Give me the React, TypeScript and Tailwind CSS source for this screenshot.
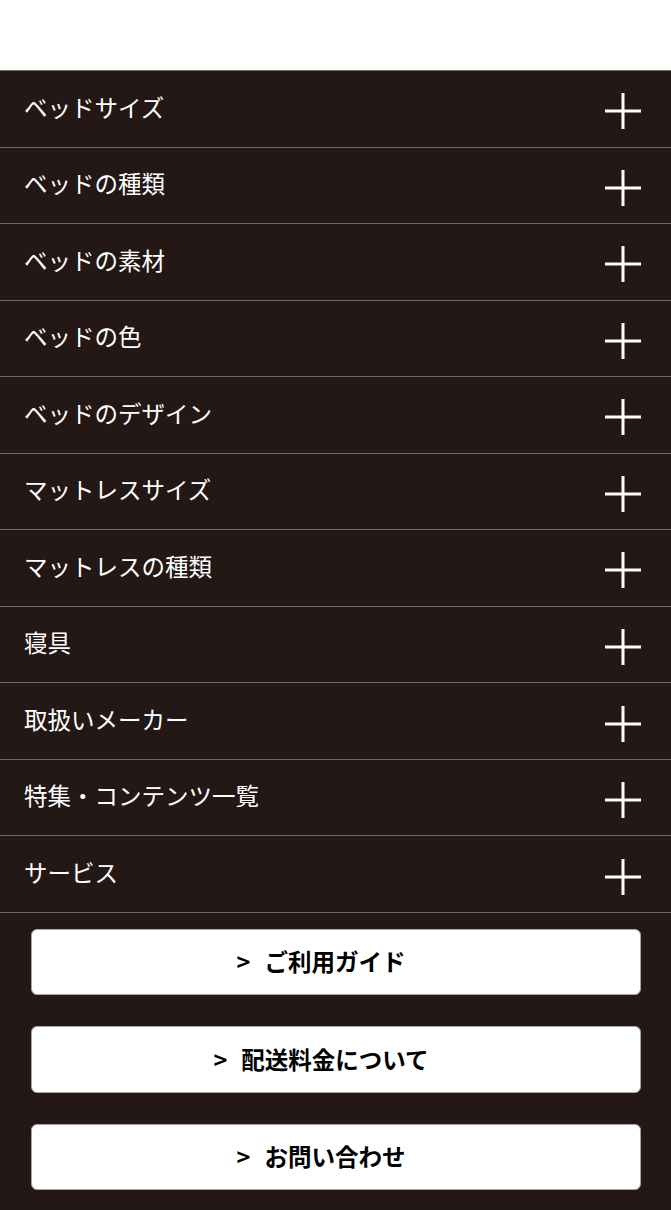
import React from "react";

const items = [
  "ベッドサイズ",
  "ベッドの種類",
  "ベッドの素材",
  "ベッドの色",
  "ベッドのデザイン",
  "マットレスサイズ",
  "マットレスの種類",
  "寝具",
  "取扱いメーカー",
  "特集・コンテンツ一覧",
  "サービス",
];

const buttons = ["ご利用ガイド", "配送料金について", "お問い合わせ"];

function Plus() {
  return (
    <svg width="36" height="36" viewBox="0 0 36 36" className="shrink-0">
      <rect x="16.5" y="0" width="3" height="36" fill="#fff" />
      <rect x="0" y="16.5" width="36" height="3" fill="#fff" />
    </svg>
  );
}

export default function App() {
  return (
    <div
      className="w-[671px] h-[1210px] bg-white overflow-hidden"
      style={{ fontFamily: '"Noto Sans CJK JP", "Noto Sans", sans-serif' }}
    >
      <div className="h-[70px] bg-white" />
      <div className="bg-[#231816] h-[1140px]">
        <ul className="border-t border-[#706868]">
          {items.map((t) => (
            <li
              key={t}
              className="h-[76.545px] border-b border-[#706868] flex items-center justify-between pl-[24px] pr-[30px]"
            >
              <span className="text-white text-[23.5px] leading-none pb-[3px]">{t}</span>
              <span className="pt-[5px]">
                <Plus />
              </span>
            </li>
          ))}
        </ul>
        <div className="flex flex-col gap-[31px] pt-[16px] pl-[31px] pr-[30px]">
          {buttons.map((b) => (
            <div
              key={b}
              className="h-[66.5px] bg-white rounded-[6px] border border-[#a8a2a2] flex items-center justify-center pr-[30px] text-black font-bold text-[23.5px] leading-none"
            >
              <span className="mr-[14px]">&gt;</span>
              <span>{b}</span>
            </div>
          ))}
        </div>
      </div>
    </div>
  );
}
